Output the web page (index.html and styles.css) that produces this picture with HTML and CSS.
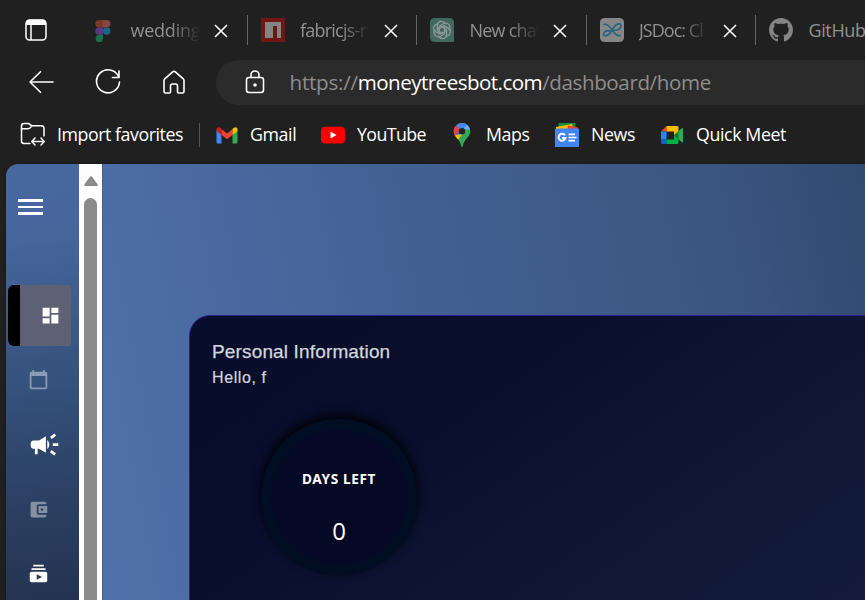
FILE: index.html
```html
<!DOCTYPE html>
<html lang="en">
<head>
<meta charset="utf-8">
<title>Dashboard</title>
<link rel="stylesheet" href="styles.css">
</head>
<body>
<div class="window">
  <header class="chrome">
    <div class="tabs">
      <svg class="tab-actions" viewBox="0 0 22 22"><rect x="1" y="1" width="20" height="20" rx="3.5" fill="none" stroke="#fff" stroke-width="1.5"/><path d="M1 6V4Q1 .7 4.500 .7H17.500Q21 .7 21 4V6Z" fill="#fff"/><path d="M6 6V21" stroke="#fff" stroke-width="1.500"/></svg>
      <div class="tab">
        <svg class="favicon" viewBox="0 0 24 24"><path d="M12 2H8a3.700 3.700 0 0 0 0 7.400h4z" fill="#7b3823"/><path d="M12 2h3.700a3.700 3.700 0 0 1 0 7.400H12z" fill="#884640"/><path d="M12 9.400H8a3.700 3.700 0 0 0 0 7.400h4z" fill="#5b3783"/><circle cx="15.700" cy="13.100" r="3.700" fill="#1b6688"/><path d="M12 16.800H8a3.700 3.700 0 1 0 4 3.700z" fill="#19704b"/></svg>
        <span class="title t-wedding">wedding</span>
        <svg class="close" viewBox="0 0 14 14"><path d="M1 1L13 13M13 1L1 13"/></svg>
      </div>
      <div class="tab">
        <svg class="favicon" viewBox="0 0 24 24"><path fill="#701716" d="M0 0h24v24H0z"/><path fill="#858585" d="M4 4h16v16h-4V8h-4v12H4z"/></svg>
        <span class="title t-fabric">fabricjs-r</span>
        <svg class="close" viewBox="0 0 14 14"><path d="M1 1L13 13M13 1L1 13"/></svg>
      </div>
      <div class="tab">
        <svg class="favicon" viewBox="0 0 24 24"><path d="M5 0H19Q24 0 24 5V24H5Q0 24 0 19V5Q0 0 5 0" fill="#43695e"/><g fill="none" stroke="#8d9a96" stroke-width="1.300" stroke-linejoin="round"><path id="knot" d="M9.300 15V8.300L13.500 5.700C17.800 3.500 21.500 8 19 12.300"/><use href="#knot" transform="rotate(60 12 12)"/><use href="#knot" transform="rotate(120 12 12)"/><use href="#knot" transform="rotate(180 12 12)"/><use href="#knot" transform="rotate(240 12 12)"/><use href="#knot" transform="rotate(300 12 12)"/></g></svg>
        <span class="title t-chat">New chat</span>
        <svg class="close" viewBox="0 0 14 14"><path d="M1 1L13 13M13 1L1 13"/></svg>
      </div>
      <div class="tab">
        <svg class="favicon" viewBox="0 0 24 24"><rect width="24" height="24" rx="4.500" fill="#878787"/><g fill="none" stroke="#286580" stroke-width="1.700"><path d="M3.500 6.500C8.500 5.500 9.500 9 12 12S16 18.500 21 17.500"/><path d="M20.500 6C15 5.500 14 9.500 11.500 13C9 17 6.500 18 4.500 17.500C2.500 16.500 4 13.200 7 12.800S17 13.500 20 10.500C21.500 8.500 21.500 6.500 20 6"/></g></svg>
        <span class="title t-jsdoc">JSDoc: Cl</span>
        <svg class="close" viewBox="0 0 14 14"><path d="M1 1L13 13M13 1L1 13"/></svg>
      </div>
      <div class="tab">
        <svg class="favicon" viewBox="0 0 16 16"><path fill="#858585" d="M8 0C3.580 0 0 3.580 0 8c0 3.540 2.290 6.530 5.470 7.590.4.070.550-.170.550-.380 0-.190-.010-.820-.010-1.490-2.010.370-2.530-.490-2.690-.940-.090-.230-.480-.940-.820-1.130-.280-.150-.680-.520-.010-.530.630-.010 1.080.580 1.230.820.720 1.210 1.870.870 2.330.660.070-.520.280-.870.510-1.070-1.780-.2-3.640-.890-3.640-3.950 0-.870.310-1.590.820-2.150-.080-.2-.360-1.020.080-2.120 0 0 .670-.210 2.200.820.640-.180 1.320-.270 2-.270s1.360.090 2 .270c1.530-1.040 2.200-.820 2.200-.820.440 1.100.160 1.920.080 2.120.510.560.820 1.270.820 2.150 0 3.070-1.870 3.750-3.650 3.950.290.250.540.730.540 1.480 0 1.070-.010 1.930-.010 2.200 0 .210.150.460.550.380A8.010 8.010 0 0 0 16 8c0-4.420-3.580-8-8-8z"/></svg>
        <span class="title t-github">GitHub</span>
      </div>
    </div>
    <div class="toolbar">
      <svg class="tool back" viewBox="0 0 28 28"><path d="M26 14H3M13.500 3.700L3 14L13.500 24.300"/></svg>
      <svg class="tool reload" viewBox="0 0 28 28"><path d="M24.500 8.500A11.500 11.500 0 1 0 25.500 14M25 3V9.500H18.500"/></svg>
      <svg class="tool home" viewBox="0 0 28 28"><path d="M4 12.500Q4 11.500 5 10.700L13 3.700Q14 3 15 3.700L23 10.700Q24 11.500 24 12.500V23Q24 25 22.500 25H18.500Q17.500 25 17.500 24V18Q17.500 16 15.500 16H12.500Q10.500 16 10.500 18V24Q10.500 25 9.500 25H5.500Q4 25 4 23Z"/></svg>
      <div class="address">
        <svg class="tool lock" viewBox="0 0 28 28"><rect x="5.500" y="9.500" width="17" height="15" rx="2.500"/><path d="M10 9.500V7a4 4 0 0 1 8 0V9.500"/><circle cx="14" cy="17" r="1" fill="#fff"/></svg>
        <div class="url"><span class="u1">https://</span><span class="u2">moneytreesbot.com</span><span class="u3">/dashboard/home</span></div>
      </div>
    </div>
    <nav class="favorites">
      <svg class="folder" viewBox="0 0 26 26"><path d="M10 21.500H4Q1.500 21.500 1.500 19V4Q1.500 1.500 4 1.500H8.500L12 3.800H21Q24 3.800 24 6.500V14M1.500 6.800H8Q9.500 6.800 12 4M12 19.500H24M15 16L11.800 19.500L15 23M21 16L24.200 19.500L21 23"/></svg>
      <span class="fav f-import">Import favorites</span>
      <i class="fav-divider"></i>
      <svg class="ico i-gmail" viewBox="0 0 24 24"><path fill="#4285f4" d="M1.500 7l5 4v9.500H3Q1.500 20.500 1.500 19z"/><path fill="#34a853" d="M22.500 7l-5 4v9.500H21Q22.500 20.500 22.500 19z"/><path fill="#ea4335" d="M6.500 6l5.500 4.500L17.500 6v6L12 16.300 6.500 12z"/><path fill="#c5221f" d="M1.500 8V6.500C1.500 4 4 3.800 5.500 5l1 1V12z"/><path fill="#fbbc04" d="M22.500 8V6.500C22.500 4 20 3.800 18.500 5l-1 1V12z"/></svg>
      <span class="fav f-gmail">Gmail</span>
      <svg class="ico i-youtube" viewBox="0 0 24 24"><rect y="3.700" width="24" height="16.800" rx="4" fill="#f00"/><path d="M9.500 8.500L15.500 12L9.500 15.600Z" fill="#fff"/></svg>
      <span class="fav f-youtube">YouTube</span>
      <svg class="ico i-maps" viewBox="0 0 24 24"><defs><clipPath id="pin"><path d="M12 0a8.300 8.300 0 0 0-8.300 8.300C3.700 14.500 10 15.500 11.200 23.200q.8 1.800 1.600 0C14 15.500 20.300 14.500 20.300 8.300A8.300 8.300 0 0 0 12 0"/></clipPath></defs><g clip-path="url(#pin)"><path fill="#34a853" d="M0 0h24v24H0z"/><path fill="#fbbc04" d="M0 17L14 0V9L7 18z"/><path fill="#ea4335" d="M0 0h7l4 6-8 8z"/><path fill="#1a73e8" d="M3 3L12 11 5.500 12Z"/><path fill="#4285f4" d="M5 0H19L11 10z"/><path fill="#70a7ff" d="M13 6L19 0 22 7z"/><path fill="#ea4335" d="M2 4L5 2 10 7 5 13z"/></g><circle cx="12" cy="8.300" r="3.200" fill="#20242b"/></svg>
      <span class="fav f-maps">Maps</span>
      <svg class="ico i-news" viewBox="0 0 24 24"><path fill="#178a43" d="M3.500 0h17v8h-17z"/><path fill="#fbbc04" d="M1 4L17 1l2 7H1z"/><path fill="#ea4335" d="M13 2.500L23 4.500 22 9H12z"/><path fill="#4285f4" d="M0 6.500Q0 5.500 1 5.500H23Q24 5.500 24 6.500V24H0z"/><path d="M10 12.300A3.500 3.500 0 1 0 10.500 15H7" fill="none" stroke="#fff" stroke-width="1.900"/><path d="M13.500 11.300H20M13.500 14.500H21.500M13.500 17.700H20" stroke="#fff" stroke-width="1.700"/></svg>
      <span class="fav f-news">News</span>
      <svg class="ico i-meet" viewBox="0 0 24 24"><path fill="#ea4335" d="M1 8.500L6.500 3V8.500z"/><path fill="#fbbc04" d="M6.500 3H17Q18.500 3 18.500 4.500V9L14 12.500V8.500H6.500z"/><path fill="#2684fc" d="M1 8.500H6.500V16.500H1z"/><path fill="#0066da" d="M1 16.500H6.500V21H2.500Q1 21 1 19.500z"/><path fill="#00ac47" d="M6.500 16.500H14V11L18.500 15V19.500Q18.500 21 17 21H6.500z"/><path fill="#34a853" d="M14 12.500L21.800 5.300Q23 4.500 23 6V18.500Q23 20 21.800 19.200z"/><path fill="#00832d" d="M14 12.500L18.500 8.300V16.200z"/></svg>
      <span class="fav f-meet">Quick Meet</span>
    </nav>
  </header>

  <main class="page">
    <aside class="sidebar">
      <div class="burger"><i></i><i></i><i></i></div>
      <div class="item active"><svg viewBox="0 0 24 24"><path d="M3 13h8V3H3v10zm0 8h8v-6H3v6zm10 0h8V11h-8v10zm0-18v6h8V3h-8z"/></svg></div>
      <div class="item dim"><svg viewBox="0 0 24 24"><path d="M20 3h-1V1h-2v2H7V1H5v2H4c-1.100 0-2 .9-2 2v16c0 1.100.9 2 2 2h16c1.100 0 2-.9 2-2V5c0-1.100-.9-2-2-2zm0 18H4V8h16v13z"/></svg></div>
      <div class="item horn"><svg viewBox="0 0 24 24"><path d="M18 11v2h4v-2h-4zm-2 6.610c.960.710 2.210 1.650 3.200 2.390.4-.530.8-1.070 1.200-1.600-.990-.740-2.240-1.680-3.200-2.400-.4.540-.8 1.080-1.200 1.610zM20.400 5.600c-.4-.530-.8-1.070-1.200-1.600-.990.740-2.240 1.680-3.200 2.400.4.530.8 1.070 1.200 1.600.960-.720 2.210-1.650 3.200-2.400zM4 9c-1.100 0-2 .9-2 2v2c0 1.100.9 2 2 2h1v4h2v-4h1l5 3V6L8 9H4zm11.500 3c0-1.330-.580-2.530-1.500-3.350v6.690c.920-.810 1.500-2.010 1.500-3.340z"/></svg></div>
      <div class="item dim wallet"><svg viewBox="0 0 24 24"><path d="M21 18v1c0 1.100-.9 2-2 2H5c-1.110 0-2-.9-2-2V5c0-1.100.890-2 2-2h14c1.100 0 2 .9 2 2v1h-9c-1.110 0-2 .9-2 2v8c0 1.100.890 2 2 2h9zm-9-2h10V8H12v8zm4-2.500c-.830 0-1.500-.670-1.500-1.500s.670-1.500 1.500-1.500 1.500.670 1.500 1.500-.670 1.500-1.500 1.500z"/></svg></div>
      <div class="item video"><svg viewBox="0 0 24 24"><path d="M20 8H4V6h16v2zm-2-6H6v2h12V2zm4 10v8c0 1.100-.9 2-2 2H4c-1.100 0-2-.9-2-2v-8c0-1.100.9-2 2-2h16c1.100 0 2 .9 2 2zm-6 4l-6-3.270v6.530L16 16z"/></svg></div>
    </aside>
    <div class="scrollbar">
      <svg viewBox="0 0 14 10"><path d="M7 .3Q7.800 .3 8.300 1L13.500 8.200Q14.300 10 13 10H1Q-.3 10 .5 8.200L5.700 1Q6.200 .3 7 .3" fill="#8b8b8b"/></svg>
      <div class="thumb"></div>
    </div>
    <section class="content">
      <article class="card">
        <h1><span>Personal Information</span></h1>
        <p class="hello"><span>Hello, f</span></p>
        <div class="days">
          <strong>DAYS LEFT</strong>
          <span>0</span>
        </div>
      </article>
    </section>
  </main>
</div>
</body>
</html>
```
FILE: styles.css
```css
* { box-sizing: border-box; }
body { margin: 0; background: #202020; font-family: "Open Sans", "Noto Sans", sans-serif; overflow: hidden; }
svg { display: block; flex: none; }
.window { width: 865px; height: 600px; overflow: hidden; display: flex; flex-direction: column; }
.chrome { height: 164px; flex: none; color: #fff; }

.tabs { height: 60px; display: flex; align-items: center; padding-left: 25px; }
.tab-actions { width: 22px; height: 22px; margin-right: 30.4px; }
.tab { width: 169.5px; height: 30px; flex: none; display: flex; align-items: center; position: relative; padding-left: 14px; }
.tab + .tab { border-left: 1.5px solid #666; padding-left: 13px; }
.favicon { width: 24px; height: 24px; }
.title { width: 69px; margin-left: 15px; flex: none; white-space: nowrap; color: #929292; font-size: 18px; letter-spacing: -.35px; line-height: 28px; margin-top: -1px; -webkit-mask-image: linear-gradient(90deg, #000 58%, transparent 103%); mask-image: linear-gradient(90deg, #000 58%, transparent 103%); }
.t-wedding { letter-spacing: -.2px; }
.t-fabric { letter-spacing: -.75px; }
.t-chat { letter-spacing: -.75px; }
.t-jsdoc { letter-spacing: -.95px; }
.t-github { -webkit-mask-image: none; mask-image: none; }
.close { width: 14px; height: 14px; margin-left: 15px; margin-top: 2px; }
.close path { fill: none; stroke: #fff; stroke-width: 1.6; }

.toolbar { height: 45px; display: flex; align-items: center; }
.tool { width: 28px; height: 28px; margin-top: -1px; fill: none; stroke: #fff; stroke-width: 1.6; stroke-linecap: round; stroke-linejoin: round; }
.back { margin-left: 27px; }
.reload { margin-left: 39px; }
.home { margin-left: 38px; }
.address { margin-left: 28px; width: 700px; height: 45px; flex: none; border-radius: 23px; background: #2b2b2b; display: flex; align-items: center; padding-left: 25px; }
.url { margin-left: 20.5px; margin-top: -1px; display: flex; font-size: 20.6px; letter-spacing: -.4px; line-height: 44px; color: #8e8e8e; white-space: nowrap; }
.u1 { letter-spacing: -.25px; }
.u2 { color: #fff; letter-spacing: -.55px; }

.favorites { height: 59px; display: flex; align-items: center; padding-left: 20px; }
.folder { width: 26px; height: 26px; fill: none; stroke: #fff; stroke-width: 1.5; stroke-linejoin: round; stroke-linecap: round; }
.fav { flex: none; font-size: 17.8px; letter-spacing: -.4px; line-height: 28px; margin-top: -1px; white-space: nowrap; }
.f-import { width: 142px; margin-left: 11px; letter-spacing: -.45px; }
.fav-divider { width: 1px; height: 24px; background: #555; }
.ico { width: 24px; height: 24px; }
.i-gmail { margin-left: 15px; }
.f-gmail { margin-left: 11px; width: 71px; }
.f-youtube { margin-left: 12px; width: 93px; letter-spacing: -.6px; }
.f-maps { margin-left: 12px; width: 69px; }
.f-news { margin-left: 12px; width: 69px; }
.f-meet { margin-left: 12px; }

.page { height: 436px; margin-left: 6px; display: flex; border-top-left-radius: 12px; overflow: hidden; box-shadow: 0 0 3px #161616; }
.sidebar { width: 73px; flex: none; background: linear-gradient(172deg, #4868a1 0%, #45659b 18%, #34507a 53%, #2f466b 67%, #243250 100%); }
.burger { margin: 35px 0 0 12px; width: 25px; height: 16px; display: flex; flex-direction: column; justify-content: space-between; }
.burger i { height: 2.6px; background: #fff; }
.item { height: 64.7px; display: flex; align-items: center; padding-left: 22px; }
.item svg { width: 21px; height: 21px; fill: #fff; }
.active { margin: 70px 8px 1.5px 2px; height: 61px; border-left: 12px solid #000; border-radius: 6px 2px 2px 6px; background: #5e6173; padding-left: 20.3px; }
.dim svg { opacity: .42; }
.horn { padding-left: 21.5px; }
.horn svg { width: 33px; height: 33px; }
.scrollbar { width: 23px; flex: none; background: #fdfdfd; padding: 12px 5px 0 4.5px; }
.scrollbar svg { width: 14px; height: 10px; }
.thumb { width: 13px; height: 430px; margin: 12px 0 0 .5px; border-radius: 7px; background: #8b8b8b; }
.content { flex: 1; border-left: 1px solid #405e8e; padding: 151px 0 0 86px; background: linear-gradient(79deg, #5171ac 0%, #4a6aa1 18%, #45659b 33%, #426090 45%, #3d5a87 68%, #3a537f 83%, #30486b 100%); }
.card { width: 700px; height: 320px; border: 1px solid #321a91; border-radius: 21px; padding: 23px 0 0 22px; background: linear-gradient(145deg, #080d2b 0%, #090e2c 35%, #0d1532 55%, #111937 75%, #151c3e 100%); color: #d4d5dc; font-family: "Liberation Sans", Arial, sans-serif; }
.card h1 { margin: 0; font-size: 19px; font-weight: 400; line-height: 26px; letter-spacing: .15px; -webkit-text-stroke: .25px; }
.hello { margin: 1px 0 0; font-size: 16px; line-height: 24px; letter-spacing: .6px; -webkit-text-stroke: .2px; }
.days { width: 156px; height: 156px; margin: 29px 0 0 49px; border: 10px solid #010d22; border-radius: 50%; background: #060925; box-shadow: 0 -4px 9px 1px #02030a; color: #fff; display: flex; flex-direction: column; align-items: center; font-family: "Open Sans", sans-serif; }
.days strong { margin-top: 40px; font-size: 13.6px; letter-spacing: .65px; line-height: 20px; white-space: nowrap; font-family: "Noto Sans", sans-serif; }
.days span { margin-top: 27px; font-size: 24px; line-height: 30px; }
```
